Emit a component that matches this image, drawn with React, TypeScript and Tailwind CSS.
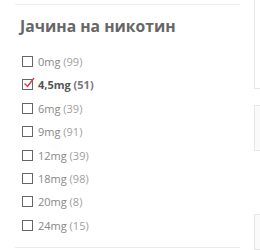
const items = [
  { label: '0mg', count: 99 },
  { label: '4,5mg', count: 51, checked: true },
  { label: '6mg', count: 39 },
  { label: '9mg', count: 91 },
  { label: '12mg', count: 39 },
  { label: '18mg', count: 98 },
  { label: '20mg', count: 8 },
  { label: '24mg', count: 15 },
]

function Box({ checked }: { checked?: boolean }) {
  return (
    <span className="relative inline-block h-[11px] w-[11px] shrink-0 border border-[#666] bg-white">
      {checked ? (
        <svg viewBox="0 0 12 12" className="absolute -top-[3px] left-0 h-[12px] w-[12px]">
          <path d="M1.5 6.5 L4.5 9.5 L11 1" fill="none" stroke="#e0343a" strokeWidth="1.3" />
        </svg>
      ) : null}
    </span>
  )
}

export default function App() {
  return (
    <div className="flex h-[250px] w-[260px] overflow-hidden bg-white font-['Open_Sans',sans-serif]">
      <div className="ml-[15px] mt-[4px] h-[244px] w-[225px] shrink-0 border-t border-b border-[#ececec]">
        <h3 className="ml-[5px] mt-[11px] text-[15.7px] font-bold leading-[20px] text-[#666]">
          Јачина на никотин
        </h3>
        <ul className="ml-[7px] mt-[20px] flex flex-col gap-[12.4px]">
          {items.map((it) => (
            <li key={it.label} className="flex h-[11px] items-center gap-[5px] text-[11px] leading-[11px]">
              <Box checked={it.checked} />
              {it.checked ? (
                <span className="font-bold text-[#555]">
                  {it.label} <span className="text-[#777]">({it.count})</span>
                </span>
              ) : (
                <span className="text-[#888]">
                  {it.label} <span className="text-[#a0a0a0]">({it.count})</span>
                </span>
              )}
            </li>
          ))}
        </ul>
      </div>

      {/* next column: cards cut off at the right edge */}
      <div className="ml-[14px] flex w-[40px] shrink-0 flex-col">
        <div className="h-[99px] border-b border-l border-[#e6e6e6]" />
        <div className="mt-[16px] h-[50px] border border-[#e6e6e6] bg-[#fafafa]" />
        <div className="mt-[63px] h-[40px] border border-[#e6e6e6] bg-[#fafafa]" />
      </div>
    </div>
  )
}
